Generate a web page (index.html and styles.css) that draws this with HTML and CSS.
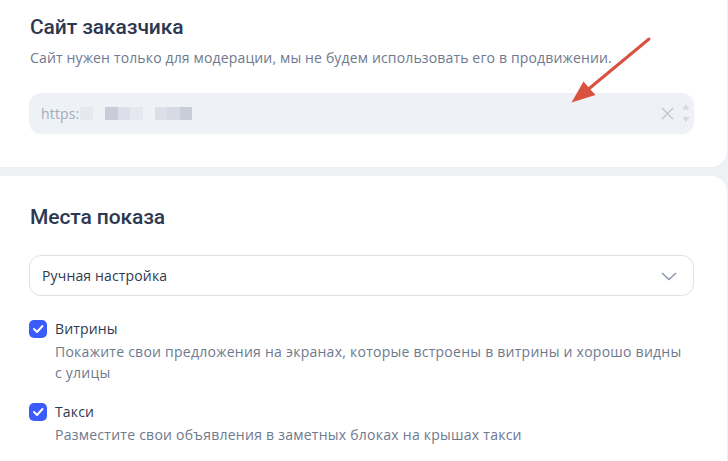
FILE: index.html
```html
<!DOCTYPE html>
<html lang="ru">
<head>
<meta charset="utf-8">
<title>Сайт заказчика</title>
<link rel="stylesheet" href="styles.css">
</head>
<body>
<div class="page">
  <section class="card card-site">
    <h2 class="card-title">Сайт заказчика</h2>
    <p class="hint">Сайт нужен только для модерации, мы не будем использовать его в продвижении.</p>
    <div class="field">
      <span class="field-text">https:</span>
      <span class="blur">
        <i class="px p1"></i><i class="px p0"></i><i class="px p3"></i><i class="px p2"></i><i class="px p1"></i><i class="px p0 gap"></i><i class="px p2"></i><i class="px p2b"></i><i class="px p3"></i>
      </span>
      <span class="field-actions">
        <svg class="clear" width="13" height="13" viewBox="0 0 13 13"><path d="M1 1L12 12M12 1L1 12" stroke="#c3c8d4" stroke-width="1.6" fill="none"/></svg>
        <svg class="spin" width="8" height="19" viewBox="0 0 8 19"><path d="M4 0.5L7.5 5.5H0.5Z" fill="#d3d7e0"/><path d="M0.5 13H7.5L4 18Z" fill="#d3d7e0"/></svg>
      </span>
    </div>
  </section>

  <section class="card card-places">
    <h2 class="card-title">Места показа</h2>
    <div class="select">
      <span>Ручная настройка</span>
      <svg width="16" height="9" viewBox="0 0 16 9"><path d="M1 1L8 7.5L15 1" stroke="#8d96a8" stroke-width="1.5" fill="none"/></svg>
    </div>
    <div class="check">
      <span class="box"><svg width="12" height="10" viewBox="0 0 12 10"><path d="M2 5L5 8L10.5 2" stroke="#fff" stroke-width="2" fill="none" stroke-linecap="round" stroke-linejoin="round"/></svg></span>
      <div class="check-body">
        <div class="check-label">Витрины</div>
        <div class="check-desc">Покажите свои предложения на экранах, которые встроены в витрины и хорошо видны<br>с улицы</div>
      </div>
    </div>
    <div class="check">
      <span class="box"><svg width="12" height="10" viewBox="0 0 12 10"><path d="M2 5L5 8L10.5 2" stroke="#fff" stroke-width="2" fill="none" stroke-linecap="round" stroke-linejoin="round"/></svg></span>
      <div class="check-body">
        <div class="check-label">Такси</div>
        <div class="check-desc">Разместите свои объявления в заметных блоках на крышах такси</div>
      </div>
    </div>
  </section>

  <svg class="annot" width="728" height="461" viewBox="0 0 728 461">
    <path d="M649 39L585 92" stroke="#d8523f" stroke-width="3" stroke-linecap="round" fill="none"/>
    <path d="M571.5 102.5L583.5 81.5L590 89L595.5 95Z" fill="#d8523f"/>
  </svg>
</div>
</body>
</html>
```

FILE: styles.css
```css
* { box-sizing: border-box; }
html, body { margin: 0; padding: 0; }
body {
  background: #eef0f4;
  font-family: "Open Sans", "Noto Sans", sans-serif;
  color: #2e3a4f;
  width: 728px;
  height: 461px;
  overflow: hidden;
}
.page {
  position: relative;
  display: flex;
  flex-direction: column;
  gap: 9px;
}
.card {
  background: #fff;
  margin-left: -14px;
  width: 741px;
  padding-left: 43px;
  padding-right: 33px;
}
.card-site {
  border-radius: 0 0 16px 16px;
  padding-top: 13px;
  padding-bottom: 33px;
  height: 167px;
}
.card-places {
  border-radius: 16px 16px 0 0;
  padding-top: 27px;
  height: 290px;
}
.card-title {
  margin: 0 0 0 1px;
  font-family: Roboto, "Open Sans", sans-serif;
  font-size: 21px;
  line-height: 28px;
  font-weight: 500;
  letter-spacing: -0.1px;
  color: #2d3850;
}
.hint {
  margin: 7px 0 0 1px;
  font-size: 14px;
  line-height: 20px;
  letter-spacing: 0.15px;
  color: #6e798e;
}
.field {
  margin-top: 25px;
  height: 41px;
  border-radius: 12px;
  background: #eef1f6;
  display: flex;
  align-items: center;
  padding: 0 4px 0 12px;
  font-size: 14px;
  letter-spacing: 0.15px;
}
.field-text { color: #a3aabb; }
.blur {
  display: flex;
  align-items: center;
  margin-left: 1px;
}
.px {
  display: block;
  width: 12.5px;
  height: 13px;
}
.p0 { background: #eef1f6; }
.p1 { background: #e5e8ef; }
.p2 { background: #dcdfe8; }
.p2b { background: #d7dae4; }
.p3 { background: #c9cdd9; }
.gap { width: 12px; }
.field-actions {
  margin-left: auto;
  display: flex;
  align-items: center;
  gap: 8px;
}
.spin { margin-top: -1px; }
.select {
  margin-top: 24px;
  height: 41px;
  border: 1px solid #dde1ea;
  border-radius: 12px;
  display: flex;
  align-items: center;
  justify-content: space-between;
  padding: 0 16px 0 12px;
  font-size: 14px;
  letter-spacing: 0.15px;
  color: #2e3a4f;
}
.select svg { margin-top: 1px; }
.check {
  display: flex;
  align-items: flex-start;
  gap: 8px;
  margin-top: 19px;
}
.select + .check { margin-top: 23px; }
.box {
  flex: none;
  width: 18px;
  height: 18px;
  margin-top: 1px;
  border-radius: 5px;
  background: #3a5cfa;
  display: flex;
  align-items: center;
  justify-content: center;
}
.check-body {
  flex: 1;
}
.check-label {
  font-size: 14px;
  line-height: 20px;
  letter-spacing: 0.15px;
  color: #2e3a4f;
}
.check-desc {
  margin-top: 2px;
  font-size: 14px;
  line-height: 21px;
  letter-spacing: 0.25px;
  color: #6e798e;
}
.annot {
  position: absolute;
  left: 0;
  top: 0;
  pointer-events: none;
}
```
